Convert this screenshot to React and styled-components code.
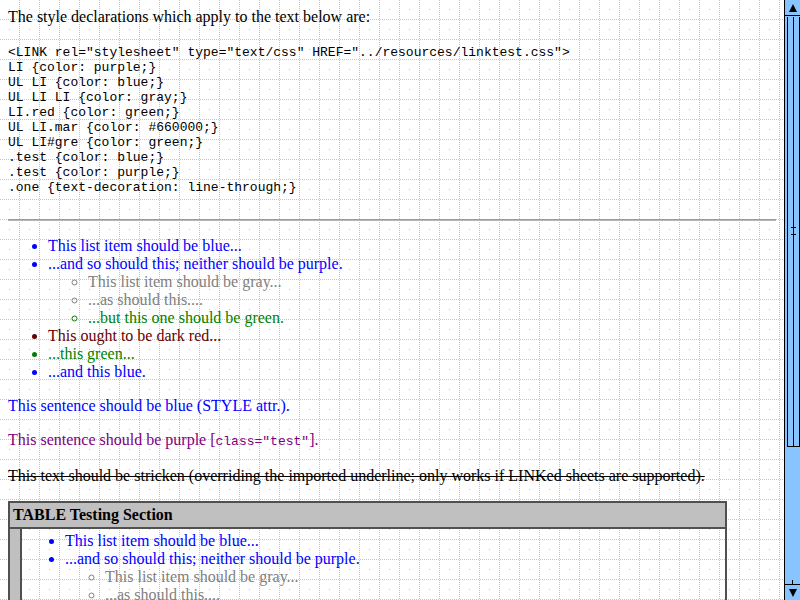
import React from 'react'
import styled, { createGlobalStyle } from 'styled-components'

// dotted 20px grid, like the test suite's bg.gif
const gridDots = []
for (let i = 0; i < 20; i += 2) {
  gridDots.push(`<rect x='19' y='${i}' width='1' height='1'/>`)
  gridDots.push(`<rect x='${i}' y='19' width='1' height='1'/>`)
}
gridDots.push(`<rect x='9' y='9' width='1' height='1'/>`)
const gridSvg = `<svg xmlns='http://www.w3.org/2000/svg' width='20' height='20' shape-rendering='crispEdges'><g fill='#c4c4c4'>${gridDots.join('')}</g></svg>`
const gridBg = `url("data:image/svg+xml,${encodeURIComponent(gridSvg)}")`

const colors = {
  blue: '#0000ff',
  gray: '#808080',
  green: '#008000',
  mar: '#660000',
  purple: '#800080',
}

// trailing blank line is part of the original PRE block
const declarations = `<LINK rel="stylesheet" type="text/css" HREF="../resources/linktest.css">
LI {color: purple;}
UL LI {color: blue;}
UL LI LI {color: gray;}
LI.red {color: green;}
UL LI.mar {color: #660000;}
UL LI#gre {color: green;}
.test {color: blue;}
.test {color: purple;}
.one {text-decoration: line-through;}

`

const GlobalStyle = createGlobalStyle`
  html, body {
    margin: 0;
    padding: 0;
    overflow: hidden;
  }
`

const Window = styled.div`
  display: flex;
  width: 800px;
  height: 600px;
  overflow: hidden;
  font-family: "Liberation Serif", "Times New Roman", serif;
  font-size: 16px;
  line-height: 18px;
  color: #000;
`

const Viewport = styled.div`
  flex: 1;
  overflow: hidden;
  background: #fff ${gridBg} repeat;
`

const Page = styled.div`
  padding: 8px 8px 0;
`

const Para = styled.p`
  margin: 0 0 16px;
  color: ${props => colors[props.tone] || '#000'};
  text-decoration: ${props => (props.strike ? 'line-through' : 'none')};
`

const Code = styled.pre`
  margin: 19px 0 9px;
  font-family: "Liberation Mono", "Courier New", monospace;
  font-size: 13px;
  line-height: 15px;
`

const Inline = styled.code`
  font-family: "Liberation Mono", "Courier New", monospace;
  font-size: 13px;
`

const Rule = styled.hr`
  margin: 0 0 16px;
  height: 0;
  border: 0;
  border-top: 1px solid #9c9c9c;
  border-bottom: 1px solid #b4b4b4;
`

const List = styled.ul`
  margin: ${props => (props.nested ? '0' : '0 0 16px')};
  padding-left: 40px;
  list-style: ${props => (props.nested ? 'circle' : 'disc')};
`

const Item = styled.li`
  color: ${props => colors[props.tone]};
`

const TestTable = styled.table`
  width: 719px;
  border: 1px solid #505050;
  border-spacing: 0;
  font-size: 16px;
  line-height: 18px;
`

const HeadCell = styled.td`
  padding: 3px;
  border: 1px solid #505050;
  background: #c0c0c0;
  font-weight: bold;
`

const SideCell = styled.td`
  width: 4px;
  padding: 3px;
  border: 1px solid #505050;
  background: #c0c0c0;
`

const BodyCell = styled.td`
  padding: 3px;
  border: 1px solid #505050;
  vertical-align: top;
`

const Scrollbar = styled.div`
  display: flex;
  flex-direction: column;
  width: 16px;
  height: 600px;
  box-sizing: border-box;
  border-left: 1px solid #000;
  background: #88c4ff;
`

const Button = styled.div`
  position: relative;
  display: flex;
  align-items: center;
  justify-content: center;
  height: 16px;
  flex: none;
  box-sizing: border-box;
  border-top: ${props => (props.down ? '1px solid #000' : '0')};
  border-bottom: ${props => (props.down ? '0' : '1px solid #000')};
`

const Arrow = styled.div`
  width: 0;
  height: 0;
  border-left: 4px solid transparent;
  border-right: 4px solid transparent;
  ${props =>
    props.down
      ? 'border-top: 8px solid #000;'
      : 'border-bottom: 8px solid #000;'}
`

const Stub = styled.div`
  position: absolute;
  left: 7px;
  top: -5px;
  width: 1px;
  height: 4px;
  background: #000;
`

const Track = styled.div`
  flex: 1;
  display: flex;
  flex-direction: column;
  padding-top: 1px;
`

const Thumb = styled.div`
  position: relative;
  height: 430px;
  margin-left: 2px;
  box-sizing: border-box;
  border-left: 1px solid #000;
  border-right: 1px solid #000;
  border-bottom: 1px solid #000;
  display: flex;
  justify-content: center;
`

const ThumbLine = styled.div`
  width: 1px;
  height: 100%;
  background: #000;
`

const Grip = styled.div`
  position: absolute;
  left: 3px;
  top: ${props => props.top}px;
  width: 5px;
  height: 1px;
  background: #000;
`

const TestContent = () => (
  <>
    <List>
      <Item tone="blue">This list item should be blue...</Item>
      <Item tone="blue">
        ...and so should this; neither should be purple.
        <List nested>
          <Item tone="gray">This list item should be gray...</Item>
          <Item tone="gray">...as should this....</Item>
          <Item tone="green">...but this one should be green.</Item>
        </List>
      </Item>
      <Item tone="mar">This ought to be dark red...</Item>
      <Item tone="green">...this green...</Item>
      <Item tone="blue">...and this blue.</Item>
    </List>
    <Para tone="blue">This sentence should be blue (STYLE attr.).</Para>
    <Para tone="purple">
      This sentence should be purple [<Inline>class="test"</Inline>].
    </Para>
    <Para strike>
      This text should be stricken (overriding the imported underline; only works if LINKed sheets are supported).
    </Para>
  </>
)

export default function App() {
  return (
    <Window>
      <GlobalStyle />
      <Viewport>
        <Page>
          <Para>The style declarations which apply to the text below are:</Para>
          <Code>{declarations}</Code>
          <Rule />
          <TestContent />
          <TestTable>
            <tbody>
              <tr>
                <HeadCell colSpan={2}>TABLE Testing Section</HeadCell>
              </tr>
              <tr>
                <SideCell>&nbsp;</SideCell>
                <BodyCell>
                  <TestContent />
                </BodyCell>
              </tr>
            </tbody>
          </TestTable>
        </Page>
      </Viewport>
      <Scrollbar>
        <Button>
          <Arrow />
        </Button>
        <Track>
          <Thumb>
            <ThumbLine />
            <Grip top={210} />
            <Grip top={217} />
          </Thumb>
        </Track>
        <Button down>
          <Stub />
          <Arrow down />
        </Button>
      </Scrollbar>
    </Window>
  )
}
